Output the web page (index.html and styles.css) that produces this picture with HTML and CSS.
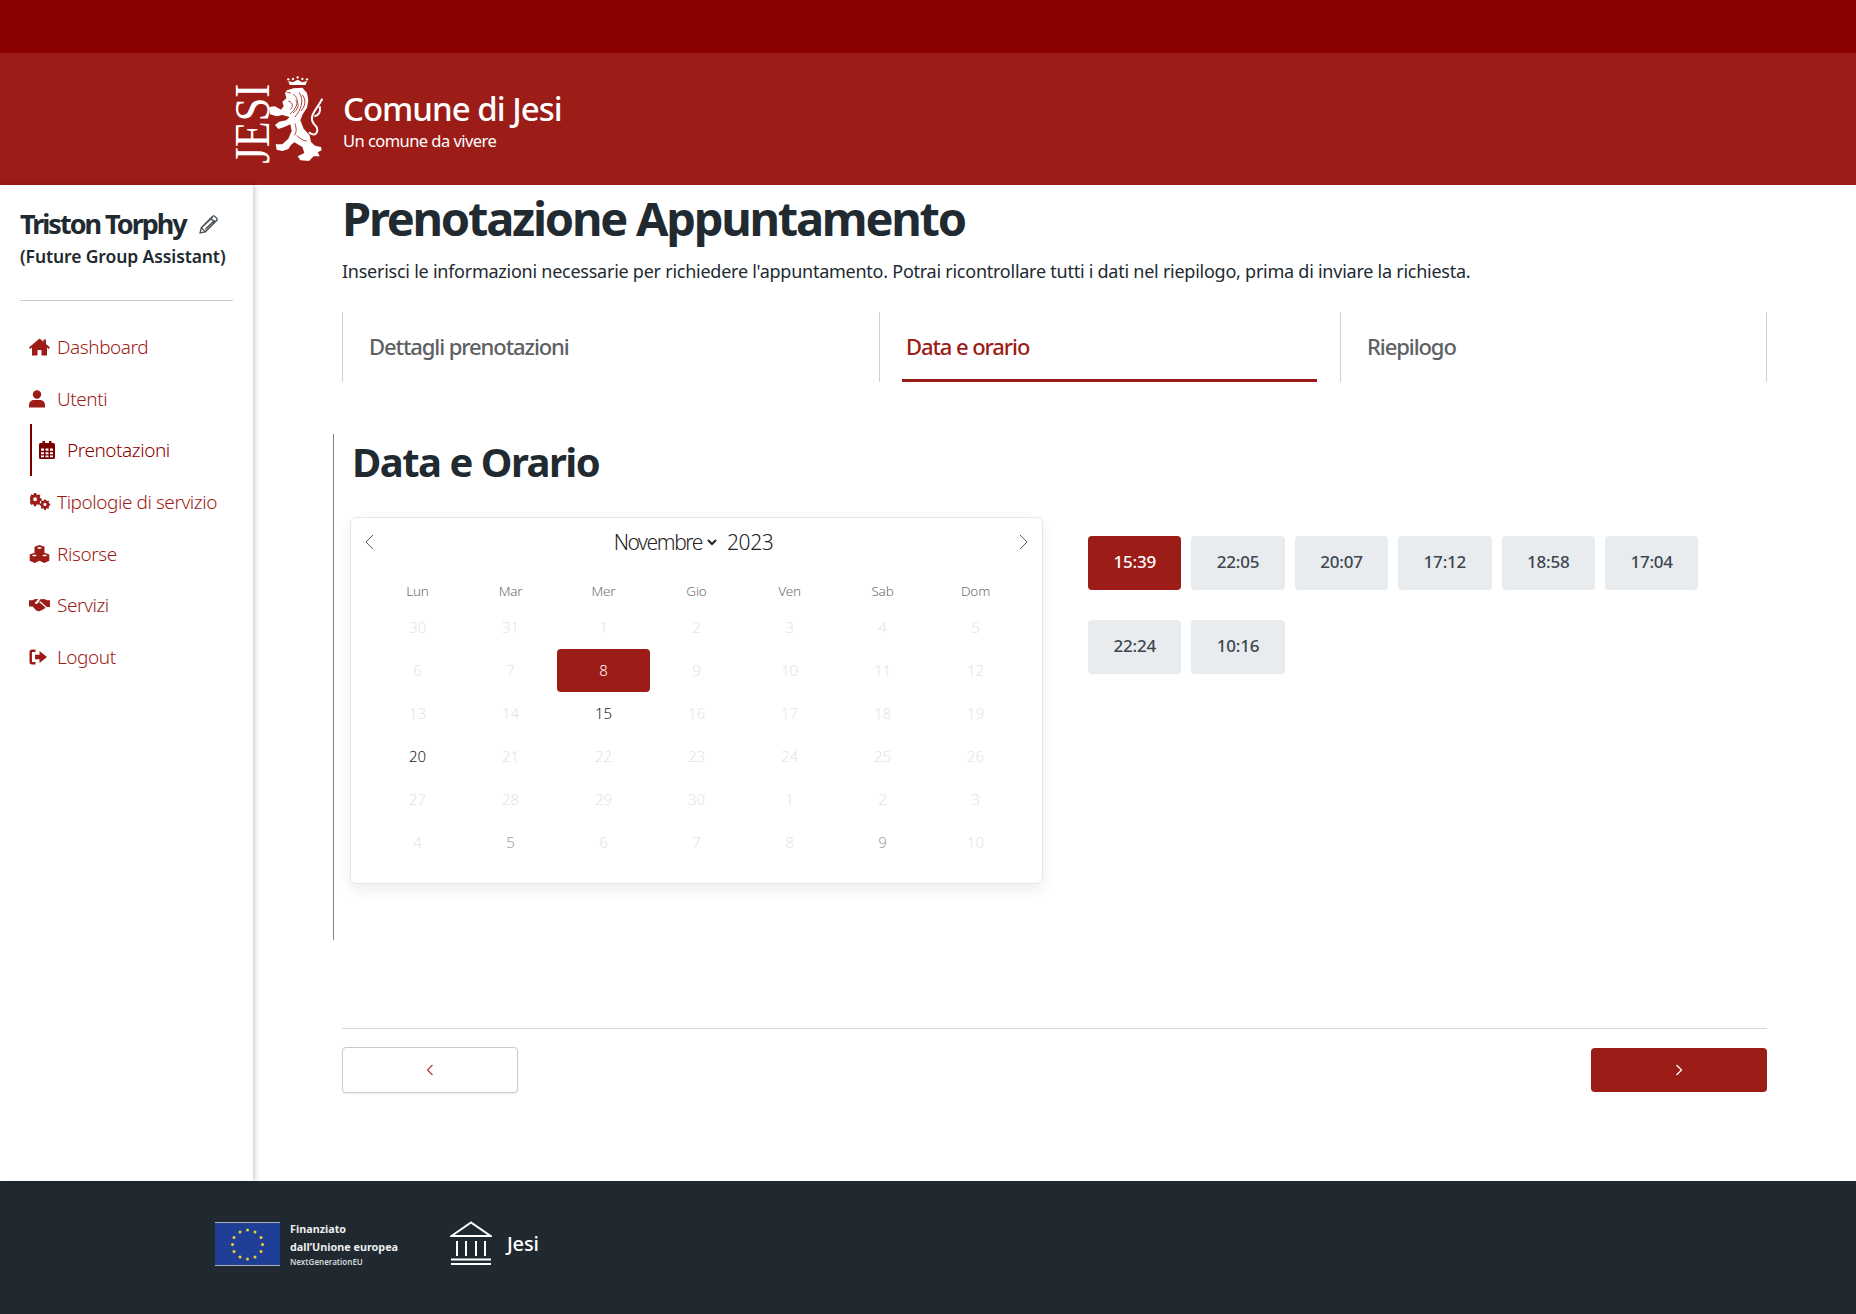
FILE: index.html
```html
<!DOCTYPE html>
<html lang="it">
<head>
<meta charset="utf-8">
<title>Prenotazione Appuntamento</title>
<link rel="stylesheet" href="styles.css">
</head>
<body>
<div class="topbar"></div>
<header class="header">
  <svg class="logo" viewBox="0 0 330 315" aria-label="Stemma">
    <text class="logo-word" transform="translate(132,290) rotate(-90)" textLength="240" lengthAdjust="spacingAndGlyphs">JESI</text>
    <path class="lion" d="M180 78L186 70L205 64L232 62L246 78L250 100L246 122L234 140L226 160L236 185L254 205L258 225L270 236L288 240L290 250L278 256L284 268L266 268L252 282L226 280L218 268L238 258L232 240L208 226L198 234L190 246L172 252L155 248L152 232L172 232L190 215L200 192L196 172L178 180L160 186L150 174L162 164L184 160L194 150L172 144L155 148L135 142L132 120L150 118L168 128L176 118L172 104L184 94Z"/>
    <path class="lion-tail" d="M252 196C272 214 288 190 266 170C250 148 272 132 292 95M268 148C282 145 288 135 284 118"/>
    <path class="lion-detail" d="M205 82C226 95 216 125 195 140M222 76C240 100 226 130 210 150M190 102C205 106 205 120 195 128M212 100C226 112 218 128 204 138M215 205C225 215 235 222 245 222M210 170C215 185 215 195 208 205M232 84C245 100 240 118 228 132M186 76L198 78"/>
    <path class="crown" d="M194 54L190 42L204 46L218 38L232 46L246 42L242 54Z"/>
    <g class="crown">
      <circle cx="190" cy="37" r="3.500"/><circle cx="204" cy="36" r="3.500"/><circle cx="218" cy="31" r="3.500"/><circle cx="232" cy="36" r="3.500"/><circle cx="246" cy="37" r="3.500"/>
    </g>
  </svg>
  <div class="brand">
    <div class="brand-name">Comune di Jesi</div>
    <div class="brand-sub">Un comune da vivere</div>
  </div>
</header>
<div class="layout">
  <aside class="sidebar">
    <div class="user">
      <div class="user-name">Triston Torphy
        <svg class="pencil" viewBox="0 0 20 20"><path d="M2 18l1.200-5L13.500 2.500a2 2 0 0 1 2.800 0l1.200 1.200a2 2 0 0 1 0 2.800L7 17zM3.200 13L7 17M12 4l4 4M5 11.500L14 3M7 14.500L16 6"/></svg>
      </div>
      <div class="user-role">(Future Group Assistant)</div>
    </div>
    <nav class="nav">
      <a class="nav-item"><svg class="nav-icon" viewBox="0 0 21 18"><path d="M10.500 .500L0 9.500l1.200 1.500L3 9.500V17.500h5.500v-5.500h4v5.500H18V9.500l1.800 1.500L21 9.500l-4-3.500V1.500h-2.500v2.300z"/></svg>Dashboard</a>
      <a class="nav-item"><svg class="nav-icon" viewBox="0 0 21 18"><circle cx="8" cy="4.500" r="4.200"/><path d="M0 17.500v-2.500c0-3 2.500-5 5-5h6c2.500 0 5 2 5 5v2.500z"/></svg>Utenti</a>
      <a class="nav-item nav-active"><svg class="nav-icon" viewBox="0 0 21 18"><path fill-rule="evenodd" d="M0 3.500A1.500 1.500 0 0 1 1.500 2H3.500V0h2.500v2h4V0h2.500v2h2A1.500 1.500 0 0 1 16 3.500V16.500A1.500 1.500 0 0 1 14.500 18h-13A1.500 1.500 0 0 1 0 16.500zM2 7.500v2.300h3V7.500zm4.500 0v2.300h3V7.500zm4.500 0v2.300h3V7.500zM2 11.200v2h3v-2zm4.500 0v2h3v-2zm4.500 0v2h3v-2zM2 14.600v1.600h3v-1.600zm4.500 0v1.600h3v-1.600zm4.500 0v1.600h3v-1.600z"/></svg>Prenotazioni</a>
      <a class="nav-item"><svg class="nav-icon" viewBox="0 0 21 18"><path fill-rule="evenodd" d="M4.800 0h2.400l.400 1.700 1.500.600L10.600 1.400 12.300 3.100 11.400 4.600l.600 1.500 1.700.400V9l-1.700.400-.600 1.500.900 1.500-1.700 1.700-1.500-.900-1.500.600-.400 1.700H4.800l-.400-1.700-1.500-.600-1.500.900L-.300 11l.900-1.500L0 8V5.500l.600-1.500L1.400 1.400 2.900 2.300 4.400 1.700zM6 5a2.300 2.300 0 1 0 0 4.600A2.300 2.300 0 0 0 6 5z" transform="translate(1 0) scale(.85)"/><path fill-rule="evenodd" d="M15.700 7h1.900l.300 1.400 1.100.500 1.200-.700 1.300 1.300-.700 1.200.500 1.100 1.400.300v1.900l-1.400.300-.500 1.100.700 1.200-1.300 1.300-1.200-.700-1.100.500-.300 1.400h-1.900l-.300-1.400-1.100-.500-1.200.700-1.300-1.300.700-1.200-.500-1.100-1.400-.300v-1.900l1.400-.300.500-1.100-.700-1.200 1.300-1.300 1.200.700 1.100-.500zM16.600 11a1.800 1.800 0 1 0 0 3.600 1.800 1.800 0 0 0 0-3.600z" transform="translate(1.500 .3) scale(.87)"/></svg>Tipologie di servizio</a>
      <a class="nav-item"><svg class="nav-icon" viewBox="0 0 21 18"><path fill-rule="evenodd" d="M10.500 0l5 1.800v6l4.800 1.700v6.200l-5 2.300-4.800-2.200-4.800 2.200-5-2.300V9.500l4.800-1.700v-6zM7.700 2.900l2.800 1 2.800-1-2.800-1zM2.600 10.500l2.800 1 2.800-1-2.800-1zm10.200 0l2.800 1 2.800-1-2.800-1z"/></svg>Risorse</a>
      <a class="nav-item"><svg class="nav-icon" viewBox="0 0 26 18"><path d="M0 3h4l4-1.500 3.500.500-4.500 4.500c1 1.800 3.300 1.300 4.500-.300l1-1 8 7-2.500 2.500-1-.500-1.500 2-1.500-.500-1.500 1.500-3.500-1.500-4.500-4.700H0zM14 2l5-.500 3 1.500h4v8.500h-4l-8-7.200-2.500 1.700z"/></svg>Servizi</a>
      <a class="nav-item"><svg class="nav-icon" viewBox="0 0 21 18"><path d="M6.500 1.500H3A2.500 2.500 0 0 0 .500 4v10A2.500 2.500 0 0 0 3 16.500h3.500V14H3V4h3.500z"/><path d="M10.500 3l7.500 6-7.500 6v-3.800H6V6.800h4.500z"/></svg>Logout</a>
    </nav>
  </aside>
  <main class="main">
    <h1 class="title">Prenotazione Appuntamento</h1>
    <p class="intro">Inserisci le informazioni necessarie per richiedere l'appuntamento. Potrai ricontrollare tutti i dati nel riepilogo, prima di inviare la richiesta.</p>
    <div class="steps">
      <div class="step step-one"><span class="step-label">Dettagli prenotazioni</span></div>
      <div class="step step-two step-active"><span class="step-label">Data e orario</span></div>
      <div class="step step-three"><span class="step-label">Riepilogo</span></div>
    </div>
    <section class="section">
      <h2 class="section-title">Data e Orario</h2>
      <div class="picker">
        <div class="calendar">
          <div class="cal-head">
            <svg class="cal-arrow" viewBox="0 0 10 18"><path d="M9 1L1 9l8 8"/></svg>
            <div class="cal-month">Novembre<svg class="cal-caret" viewBox="0 0 10 7"><path d="M1 1l4 4 4-4"/></svg><span class="cal-year">2023</span></div>
            <svg class="cal-arrow" viewBox="0 0 10 18"><path d="M1 1l8 8-8 8"/></svg>
          </div>
          <div class="cal-grid">
            <span class="dow">Lun</span><span class="dow">Mar</span><span class="dow">Mer</span><span class="dow">Gio</span><span class="dow">Ven</span><span class="dow">Sab</span><span class="dow">Dom</span>
            <span class="day">30</span><span class="day">31</span><span class="day">1</span><span class="day">2</span><span class="day">3</span><span class="day">4</span><span class="day">5</span>
            <span class="day">6</span><span class="day">7</span><span class="day day-sel">8</span><span class="day">9</span><span class="day">10</span><span class="day">11</span><span class="day">12</span>
            <span class="day">13</span><span class="day">14</span><span class="day day-on">15</span><span class="day">16</span><span class="day">17</span><span class="day">18</span><span class="day">19</span>
            <span class="day day-on">20</span><span class="day">21</span><span class="day">22</span><span class="day">23</span><span class="day">24</span><span class="day">25</span><span class="day">26</span>
            <span class="day">27</span><span class="day">28</span><span class="day">29</span><span class="day">30</span><span class="day">1</span><span class="day">2</span><span class="day">3</span>
            <span class="day">4</span><span class="day day-mid">5</span><span class="day">6</span><span class="day">7</span><span class="day">8</span><span class="day day-mid">9</span><span class="day">10</span>
          </div>
        </div>
        <div class="times">
          <button class="time time-sel">15:39</button><button class="time">22:05</button><button class="time">20:07</button><button class="time">17:12</button><button class="time">18:58</button><button class="time">17:04</button><button class="time">22:24</button><button class="time">10:16</button>
        </div>
      </div>
    </section>
    <div class="actions">
      <button class="btn btn-back"><svg class="btn-arrow" viewBox="0 0 8 12"><path d="M6.500 1L1.500 6l5 5"/></svg></button>
      <button class="btn btn-next"><svg class="btn-arrow" viewBox="0 0 8 12"><path d="M1.500 1l5 5-5 5"/></svg></button>
    </div>
  </main>
</div>
<footer class="footer">
  <svg class="flag" viewBox="0 0 65 44">
    <rect width="65" height="44" fill="#a9b1bb"/>
    <rect y="1" width="65" height="42" fill="#1f3f97"/>
    <g fill="#f4cf2c">
      <circle cx="32.500" cy="8" r="1.500"/><circle cx="40" cy="10" r="1.500"/><circle cx="46" cy="15.500" r="1.500"/><circle cx="47.500" cy="22.500" r="1.500"/><circle cx="46" cy="29.500" r="1.500"/><circle cx="40" cy="35" r="1.500"/><circle cx="32.500" cy="37" r="1.500"/><circle cx="25" cy="35" r="1.500"/><circle cx="19" cy="29.500" r="1.500"/><circle cx="17.500" cy="22.500" r="1.500"/><circle cx="19" cy="15.500" r="1.500"/><circle cx="25" cy="10" r="1.500"/>
    </g>
  </svg>
  <div class="eu-text">
    <div class="eu-line">Finanziato</div>
    <div class="eu-line">dall’Unione europea</div>
    <div class="eu-small">NextGenerationEU</div>
  </div>
  <svg class="bank" viewBox="0 0 42 45">
    <path d="M1.500 15L21 1.500 40.500 15zM7 20v15M16 20v15M26 20v15M35 20v15M1 38.500h40M1 43h40"/>
  </svg>
  <div class="bank-name">Jesi</div>
</footer>
</body>
</html>
```
FILE: styles.css
```css
* { box-sizing: border-box; }
html, body { margin: 0; padding: 0; }
body { width: 1856px; height: 1314px; overflow: hidden; background: #fff; color: #212a30; font-family: "Noto Sans", "Open Sans", sans-serif; }

.topbar { height: 53px; background: #8b0000; }
.header { height: 132px; background: #9c1c17; display: flex; align-items: center; padding-left: 225px; }
.logo { width: 110px; height: 105px; margin-top: 1px; flex: none; }
.logo-word { fill: #fff; font-family: "Liberation Serif", serif; font-size: 150px; }
.lion { fill: #fff; }
.lion-tail { fill: none; stroke: #fff; stroke-width: 6; }
.lion-detail { fill: none; stroke: #9c1c17; stroke-width: 2.500; }
.crown { fill: #fff; }
.brand { margin-left: 8px; color: #fff; margin-top: 3px; }
.brand-name { font-size: 33px; line-height: 40px; font-weight: 500; letter-spacing: -1px; }
.brand-sub { font-size: 16.500px; line-height: 24px; letter-spacing: -.55px; }

.layout { display: flex; height: 996px; }
.sidebar { width: 253px; flex: none; background: #fff; box-shadow: 2px 0 5px rgba(0,0,0,.2); padding: 19px 20px 0; }
.user { height: 97px; border-bottom: 1px solid #c9cbcd; width: 213px; margin-bottom: 20px; }
.user-name { font-size: 27px; line-height: 40px; font-weight: 700; letter-spacing: -2px; display: flex; align-items: center; gap: 12px; white-space: nowrap; }
.pencil { width: 21px; height: 21px; fill: none; stroke: #4a5055; stroke-width: 1.300; }
.user-role { font-size: 17.500px; line-height: 24px; font-weight: 600; letter-spacing: -.1px; white-space: nowrap; }
.nav { display: flex; flex-direction: column; }
.nav-item { display: flex; align-items: center; height: 51.700px; padding-left: 9px; color: #9c1c17; font-size: 19px; font-weight: 300; letter-spacing: -.45px; white-space: nowrap; }
.nav-icon { width: 28px; height: 18px; fill: #9c1c17; flex: none; padding-right: 7px; overflow: visible; }
.nav-active { border-left: 2px solid #7a0000; margin-left: 10px; padding-left: 7px; color: #8b0000; }
.nav-active .nav-icon { fill: #7a0000; }

.main { flex: 1; min-width: 0; padding: 0 89px; display: flex; flex-direction: column; }
.title { margin: 0; font-size: 47px; line-height: 66px; font-weight: 700; letter-spacing: -2.250px; }
.intro { margin: 5px 0 0; font-size: 18px; line-height: 30px; letter-spacing: -.25px; white-space: nowrap; }
.steps { display: grid; grid-template-columns: 537px 461px 427px; height: 70px; margin-top: 26px; border-right: 1px solid #cfd1d3; }
.step { border-left: 1px solid #cfd1d3; padding: 0 26px 2px; display: flex; align-items: center; position: relative; }
.step-label { font-size: 22px; font-weight: 500; color: #5d6064; letter-spacing: -1.080px; }
.step-active .step-label { color: #9c1c17; }
.step-active::after { content: ""; position: absolute; left: 22px; right: 23px; bottom: 0; height: 3px; background: #9c1c17; }

.section { margin: 52px 0 0 -9px; border-left: 1px solid #80868b; height: 506px; padding-left: 18px; }
.section-title { margin: 0; font-size: 40px; line-height: 56px; font-weight: 700; letter-spacing: -1.500px; }
.picker { display: flex; margin: 27px 0 0 -2px; align-items: flex-start; }
.calendar { width: 693px; height: 367px; border: 1px solid #e5e6e7; border-radius: 6px; box-shadow: 0 6px 14px rgba(0,0,0,.07); padding: 0 20px; flex: none; }
.cal-head { display: flex; justify-content: space-between; align-items: center; height: 48px; margin: 0 -6px 0 -6px; }
.cal-arrow { width: 9px; height: 16px; fill: none; stroke: #444; stroke-width: 1; }
.cal-month { font-size: 21px; font-weight: 300; color: #222; letter-spacing: -1.400px; display: flex; align-items: center; margin-right: 6px; }
.cal-caret { width: 10px; height: 7px; fill: none; stroke: #222; stroke-width: 2; margin: 0 10px 0 5px; }
.cal-year { letter-spacing: -.4px; }
.cal-grid { display: grid; grid-template-columns: repeat(7, 93px); grid-template-rows: 36px; grid-auto-rows: 43px; margin-top: 4px; }
.dow { display: flex; align-items: center; justify-content: center; font-size: 13.500px; font-weight: 300; color: #6a6e72; letter-spacing: -.2px; height: 36px; padding-top: 5px; }
.day { display: flex; align-items: center; justify-content: center; font-size: 15px; font-weight: 300; color: #e3e4e6; border-radius: 4px; padding-bottom: 2px; }
.day-on { color: #222; }
.day-mid { color: #9b9c9e; }
.day-sel { background: #9c1c17; color: #fff; }

.times { display: flex; flex-wrap: wrap; width: 660px; margin: 19px 0 0 45px; gap: 30px 10px; align-content: flex-start; }
.time { width: 93.400px; height: 54px; border: 0; border-radius: 4px; background: #e9ecef; color: #3d4650; font-family: inherit; font-size: 17px; font-weight: 500; letter-spacing: -.2px; padding: 0 0 3px; }
.time-sel { background: #9c1c17; color: #fff; }

.actions { border-top: 1px solid #d7d8da; margin-top: 88px; padding-top: 18px; display: flex; justify-content: space-between; align-items: center; }
.btn { width: 176px; height: 46px; border-radius: 4px; padding: 0; display: flex; align-items: center; justify-content: center; }
.btn-back { background: #fff; border: 1px solid #c9cbcd; box-shadow: 0 1px 2px rgba(0,0,0,.08); }
.btn-next { background: #9c1c17; border: 0; height: 44px; }
.btn-arrow { width: 8px; height: 12px; fill: none; stroke-width: 1.300; }
.btn-back .btn-arrow { stroke: #b8403b; }
.btn-next .btn-arrow { stroke: #fff; }

.footer { height: 133px; background: #1f292f; display: flex; align-items: center; padding: 0 0 8px 215px; color: #fff; }
.flag { width: 65px; height: 44px; flex: none; }
.eu-text { margin-left: 10px; width: 158px; flex: none; }
.eu-line { font-size: 10.800px; line-height: 18px; font-weight: 700; color: #eceeef; white-space: nowrap; }
.eu-small { font-size: 8px; line-height: 11px; font-weight: 600; color: #d6d9db; white-space: nowrap; }
.bank { width: 42px; height: 45px; fill: none; stroke: #fff; stroke-width: 2; flex: none; margin-left: 2px; }
.bank-name { margin-left: 15px; font-size: 20px; font-weight: 500; letter-spacing: -.2px; }
```
